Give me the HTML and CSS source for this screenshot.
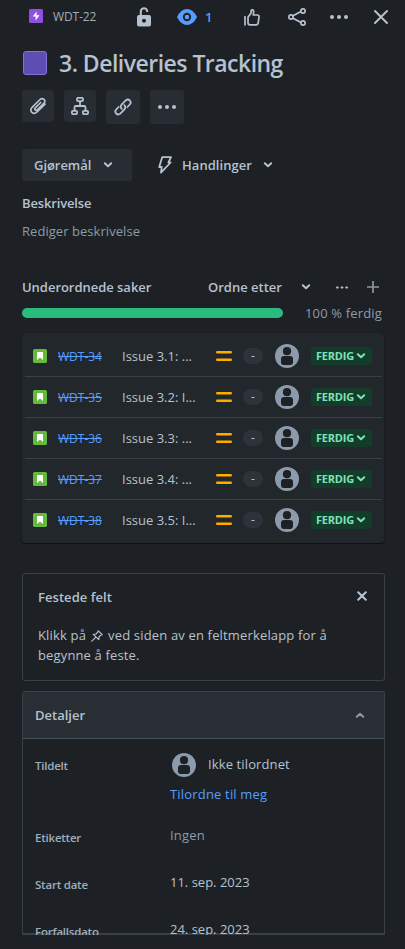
FILE: index.html
```html
<!DOCTYPE html>
<html lang="nb">
<head>
<meta charset="utf-8">
<title>WDT-22</title>
<link rel="stylesheet" href="styles.css">
</head>
<body>
<svg class="defs" width="0" height="0">
  <symbol id="chevron" viewBox="0 0 10 8"><path d="M1.8 2.2 5 5.2 8.2 2.2" fill="none" stroke="currentColor" stroke-width="2" stroke-linecap="round" stroke-linejoin="round"/></symbol>
  <symbol id="dots" viewBox="0 0 18 4"><circle cx="2" cy="2" r="2"/><circle cx="9" cy="2" r="2"/><circle cx="16" cy="2" r="2"/></symbol>
  <symbol id="avatar" viewBox="0 0 24 24"><circle cx="12" cy="12" r="12" fill="#8c9bab"/><circle cx="12" cy="7.2" r="4.1" fill="#1d2125"/><path d="M6 15a3 3 0 0 1 3-3h6a3 3 0 0 1 3 3v3.600a2.400 2.400 0 0 1-2.400 2.400H8.400A2.400 2.400 0 0 1 6 18.600z" fill="#1d2125"/></symbol>
  <symbol id="story" viewBox="0 0 14 14"><rect width="14" height="14" rx="1.5" fill="#63ba3c"/><path d="M4 3.500Q4 3 4.500 3H9.500Q10 3 10 3.500V11L7 8.500 4 11z" fill="#fff"/></symbol>
  <symbol id="medium" viewBox="0 0 16 10"><path d="M1.200 1.300h13.600M1.200 8.700h13.600" stroke="#ffab00" stroke-width="2.400" stroke-linecap="round"/></symbol>
</svg>

<header class="topbar">
  <svg class="epic" width="14" height="14" viewBox="0 0 14 14"><rect width="14" height="14" rx="1.500" fill="#904ee2"/><path d="M7.600 2.500 3.700 7.600H6.600V11.500L10.500 6.300H7.600z" fill="#fff"/></svg>
  <span class="key">WDT-22</span>
  <svg class="lock" width="14" height="20" viewBox="0 0 14 20"><path d="M3.800 9V4.600a3.200 3.200 0 0 1 6.400-.4V5" fill="none" stroke="#b6c2cf" stroke-width="2"/><path fill-rule="evenodd" d="M2 8h10a2 2 0 0 1 2 2v7.500a2 2 0 0 1-2 2H2a2 2 0 0 1-2-2V10a2 2 0 0 1 2-2zm5 3.800a2 2 0 1 0 0 4 2 2 0 0 0 0-4z" fill="#b6c2cf"/></svg>
  <svg class="eye" width="20" height="16" viewBox="0 0 20 16"><path d="M0 8Q4 0 10 0t10 8q-4 8-10 8T0 8z" fill="#579dff"/><circle cx="10" cy="8" r="3.200" fill="#579dff" stroke="#1d2125" stroke-width="1.900"/><circle cx="10" cy="8" r="1.500" fill="#579dff"/></svg>
  <span class="watchers">1</span>
  <svg class="like" width="16" height="17" viewBox="0 0 16 17"><path d="M1 7.500v8.300M4 8.300 7.100 4V2q0-1.200 1.200-1.200T9.700 2.300L9.200 6h4q2.100 0 1.800 2.100l-.8 5.700q-.3 2-2.200 2H6q-2 0-2-2z" fill="none" stroke="#b6c2cf" stroke-width="1.700" stroke-linecap="round" stroke-linejoin="round"/></svg>
  <svg class="share" width="18" height="18" viewBox="0 0 18 18"><path d="M4.500 8 13 3.500M4.500 10 13 14.500" stroke="#b6c2cf" stroke-width="1.800"/><g fill="#1d2125" stroke="#b6c2cf" stroke-width="1.700"><circle cx="3" cy="9" r="2.100"/><circle cx="15" cy="3" r="2.100"/><circle cx="15" cy="15" r="2.100"/></g></svg>
  <svg class="more" width="18" height="4"><use href="#dots"/></svg>
  <svg class="close" width="14" height="14" viewBox="0 0 14 14"><path d="M1 1l12 12M13 1 1 13" stroke="#b6c2cf" stroke-width="1.900" stroke-linecap="round"/></svg>
</header>

<main>
  <div class="heading">
    <span class="swatch"></span>
    <h1>3. Deliveries Tracking</h1>
  </div>

  <div class="tools">
    <button class="tool"><svg width="18" height="18" viewBox="0 0 18 18"><path d="m11.700 5.500-5.600 5.600q-.8 1 .1 1.900t1.900.1l6.700-6.700q2-2.100.2-4-2-1.800-4 .1L3.100 10.300q-2.400 2.700-.2 5 2.300 2.100 4.900-.1l8.200-8" fill="none" stroke="#b6c2cf" stroke-width="1.700" stroke-linecap="round"/></svg></button>
    <button class="tool"><svg width="18" height="18" viewBox="0 0 18 18"><g fill="none" stroke="#b6c2cf" stroke-width="1.800"><rect x="6" y=".9" width="6" height="3.200" rx="1"/><rect x=".9" y="13.900" width="5.200" height="3.200" rx="1"/><rect x="11.900" y="13.900" width="5.200" height="3.200" rx="1"/><path d="M9 4.500V9M3.500 13.500v-3q0-1.500 1.500-1.500h8q1.500 0 1.500 1.500v3"/></g></svg></button>
    <button class="tool wide"><svg width="18" height="18" viewBox="0 0 18 18"><g fill="none" stroke="#b6c2cf" stroke-width="1.800" stroke-linecap="round"><path d="M7.700 10.800q-2-2.300.1-4.400l3.900-4q2.200-1.800 4.100.1 1.800 2 0 4L13.400 9"/><path d="M10.300 7.200q2 2.300-.1 4.400l-3.900 4q-2.200 1.800-4.100-.1-1.800-2 0-4L4.600 9"/></g></svg></button>
    <button class="tool wide"><svg width="18" height="4"><use href="#dots"/></svg></button>
  </div>

  <div class="actions">
    <button class="status"><span class="t-status">Gjøremål</span><svg width="10" height="8"><use href="#chevron"/></svg></button>
    <button class="plain"><svg width="14" height="18" viewBox="0 0 14 18"><path d="M4.200 1.200H13L10.400 6.500H12.600L3 16.700 3.700 11H1.200z" fill="none" stroke="#b6c2cf" stroke-width="1.800" stroke-linejoin="round"/></svg><span class="t-actions">Handlinger</span><svg width="10" height="8"><use href="#chevron"/></svg></button>
  </div>

  <h2 class="desc-title">Beskrivelse</h2>
  <p class="desc">Rediger beskrivelse</p>

  <div class="children-head">
    <h2>Underordnede saker</h2>
    <span class="sort">Ordne etter</span>
    <svg class="sort-icon" width="10" height="8"><use href="#chevron"/></svg>
    <svg class="small-dots" width="12" height="3" viewBox="0 0 18 4"><use href="#dots"/></svg>
    <svg width="12" height="12" viewBox="0 0 12 12"><path d="M6 0v12M0 6h12" stroke="#8c97a4" stroke-width="1.700"/></svg>
  </div>
  <div class="progress"><span class="bar"></span><span class="done">100 % ferdig</span></div>

  <ul class="issues">
    <li><svg width="14" height="14"><use href="#story"/></svg><a>WDT-34</a><span class="name">Issue 3.1: ...</span><svg class="prio" width="16" height="10"><use href="#medium"/></svg><span class="points">-</span><svg width="24" height="24"><use href="#avatar"/></svg><span class="lozenge"><b>FERDIG</b><svg width="10" height="8"><use href="#chevron"/></svg></span></li>
    <li><svg width="14" height="14"><use href="#story"/></svg><a>WDT-35</a><span class="name">Issue 3.2: I...</span><svg class="prio" width="16" height="10"><use href="#medium"/></svg><span class="points">-</span><svg width="24" height="24"><use href="#avatar"/></svg><span class="lozenge"><b>FERDIG</b><svg width="10" height="8"><use href="#chevron"/></svg></span></li>
    <li><svg width="14" height="14"><use href="#story"/></svg><a>WDT-36</a><span class="name">Issue 3.3: ...</span><svg class="prio" width="16" height="10"><use href="#medium"/></svg><span class="points">-</span><svg width="24" height="24"><use href="#avatar"/></svg><span class="lozenge"><b>FERDIG</b><svg width="10" height="8"><use href="#chevron"/></svg></span></li>
    <li><svg width="14" height="14"><use href="#story"/></svg><a>WDT-37</a><span class="name">Issue 3.4: ...</span><svg class="prio" width="16" height="10"><use href="#medium"/></svg><span class="points">-</span><svg width="24" height="24"><use href="#avatar"/></svg><span class="lozenge"><b>FERDIG</b><svg width="10" height="8"><use href="#chevron"/></svg></span></li>
    <li><svg width="14" height="14"><use href="#story"/></svg><a>WDT-38</a><span class="name">Issue 3.5: I...</span><svg class="prio" width="16" height="10"><use href="#medium"/></svg><span class="points">-</span><svg width="24" height="24"><use href="#avatar"/></svg><span class="lozenge"><b>FERDIG</b><svg width="10" height="8"><use href="#chevron"/></svg></span></li>
  </ul>

  <section class="pinned">
    <div class="pinned-head"><h2>Festede felt</h2><svg width="10" height="10" viewBox="0 0 10 10"><path d="M1.200 1.200l7.600 7.600M8.800 1.200 1.200 8.800" stroke="#b6c2cf" stroke-width="2" stroke-linecap="round"/></svg></div>
    <p><span class="line1">Klikk på <svg width="12" height="12" viewBox="0 0 12 12"><path d="M7.300.8 11.200 4.700 9.800 5.200 8 7 7.700 9.700 2.300 4.300 5 4 6.800 2.200zM4.700 7.300.8 11.200" fill="none" stroke="#b6c2cf" stroke-width="1.200" stroke-linejoin="round" stroke-linecap="round"/></svg> ved siden av en feltmerkelapp for å</span><br><span class="line2">begynne å feste.</span></p>
  </section>

  <section class="details">
    <div class="details-head"><h2>Detaljer</h2><svg width="10" height="8"><use href="#chevron"/></svg></div>
    <dl>
      <div class="field assignee"><dt>Tildelt</dt><dd><span class="person"><svg width="24" height="24"><use href="#avatar"/></svg><span class="who">Ikke tilordnet</span></span><a>Tilordne til meg</a></dd></div>
      <div class="field labels"><dt>Etiketter</dt><dd class="none">Ingen</dd></div>
      <div class="field"><dt>Start date</dt><dd class="date">11. sep. 2023</dd></div>
      <div class="field"><dt>Forfallsdato</dt><dd class="date">24. sep. 2023</dd></div>
    </dl>
  </section>
</main>
</body>
</html>
```
FILE: styles.css
```css
* { box-sizing: border-box; }
body {
  margin: 0;
  height: 949px;
  overflow: hidden;
  background: #1d2125;
  color: #b6c2cf;
  font: 13px/20px "Open Sans", "Noto Sans", sans-serif;
}
svg { display: block; flex: none; fill: #b6c2cf; }
.defs { position: absolute; }
h1, h2, p, ul, dl, dd { margin: 0; padding: 0; }
h2 { font-size: 13px; line-height: 20px; font-weight: 600; letter-spacing: -.15px; }
button { border: 0; padding: 0; color: inherit; font: inherit; font-weight: 600; }
span, a, b { white-space: nowrap; }

.topbar { display: flex; align-items: center; height: 33px; padding-left: 29px; }
.epic { margin-top: -2px; }
.key { width: 84px; padding-left: 10px; font-size: 12px; color: #9fadbc; letter-spacing: -.1px; }
.lock { margin-left: 10px; }
.eye { margin-left: 26px; margin-top: 1px; }
.eye + .watchers { width: 10px; margin: 1px 29px 0 8px; color: #579dff; font-weight: 600; }
.like { margin-top: 1px; }
.share { margin-left: 28px; }
.more { margin-left: 24px; }
.close { margin-left: 26px; }

main { padding: 0 20px 0 22px; }
.heading { display: flex; align-items: center; height: 60px; padding-left: 1px; }
.swatch { width: 24px; height: 24px; border: 1px solid #8270db; border-radius: 3px; background: #5e4db2; }
h1 { margin-left: 12px; font-size: 23px; line-height: 28px; font-weight: 600; letter-spacing: -.52px; white-space: nowrap; }

.tools { display: flex; margin-top: -3px; height: 34px; gap: 10px; }
.tool { display: flex; align-items: center; justify-content: center; width: 32px; height: 32px; border-radius: 3px; background: #282d33; }
.tool.wide { width: 34px; height: 34px; }

.actions { display: flex; margin-top: 25px; height: 32px; }
.status { display: flex; align-items: center; width: 110px; padding-left: 12px; border-radius: 3px; background: #282d33; }
.t-status { width: 69px; text-align: left; letter-spacing: -.05px; }
.plain { display: flex; align-items: center; margin-left: 26px; background: none; }
.t-actions { width: 81px; margin-left: 10px; text-align: left; letter-spacing: .05px; }

.desc-title { margin-top: 12px; }
.desc { margin-top: 8px; color: #8c9bab; letter-spacing: .05px; }

.children-head { display: flex; align-items: center; margin-top: 36px; height: 20px; }
.children-head h2 { width: 186px; letter-spacing: -.03px; }
.sort { width: 93px; font-weight: 600; letter-spacing: 0; }
.small-dots { margin: 0 19px 0 25px; }

.progress { display: flex; align-items: center; margin-top: 6px; height: 20px; }
.bar { width: 261px; height: 10px; border-radius: 5px; background: #2abb7f; }
.done { margin-left: 22px; color: #8c9bab; letter-spacing: .15px; }

.issues { width: 362px; height: 210px; margin-top: 10px; padding: 3px 2px 2px 3px; list-style: none; border-radius: 3px; background: #22272b; box-shadow: 0 1px 1px #03040480, 0 0 1px #03040480; }
.issues li { display: flex; align-items: center; height: 41px; padding-left: 8px; border-bottom: 1px solid #38414a; }
.issues li:last-child { border-bottom-color: transparent; }
.issues a { width: 75px; padding: 1px 0 0 11px; font-size: 12px; font-weight: 500; color: #579dff; text-decoration: line-through; letter-spacing: 0; }
.name { width: 94px; margin-top: -1px; }
.points { width: 20px; height: 16px; margin: 0 12px 0 11px; border-radius: 8px; background: #2c333a; font-size: 12px; line-height: 16px; text-align: center; }
.lozenge { display: flex; align-items: center; width: 61px; height: 18px; margin-left: 12px; padding-left: 5px; border-radius: 3px; background: #143c2b; color: #7ee2b8; }
.lozenge b { width: 40px; font-size: 11px; line-height: 16px; letter-spacing: -.2px; }

.pinned { width: 363px; height: 108px; margin-top: 30px; padding: 13px 15px; border: 1px solid #38414a; border-radius: 3px; }
.pinned-head { display: flex; justify-content: space-between; }
.pinned-head h2 { letter-spacing: .05px; }
.pinned-head svg { margin: 4px 2px 0 0; }
.pinned p { margin-top: 18px; }
.pinned p svg { display: inline-block; margin: 0 2px 0 1px; vertical-align: -2px; }
.line1 { letter-spacing: .16px; }
.line2 { letter-spacing: .14px; }

.details { width: 363px; height: 244px; margin-top: 10px; border: 1px solid #38414a; border-bottom: 0; border-radius: 3px 3px 0 0; overflow: hidden; background: linear-gradient(#38414a, #38414a) 0 241px / 100% 2px no-repeat; }
.details-head { display: flex; align-items: center; justify-content: space-between; height: 47px; padding: 0 19px 0 12px; border-bottom: 1px solid #454f59; background: #282e33; }
.details-head h2 { letter-spacing: 0; }
.details-head svg { transform: rotate(180deg); color: #8c9bab; }
.field { display: grid; grid-template-columns: 135px 1fr; height: 47px; padding-left: 12px; }
.field dt { padding-top: 3px; font-size: 11.5px; font-weight: 600; color: #9fadbc; letter-spacing: -.22px; }
.assignee { height: 86px; padding-top: 14px; }
.person { display: flex; align-items: center; height: 24px; margin-left: 2px; }
.who { margin: -2px 0 0 12px; letter-spacing: .12px; }
.assignee a { display: block; margin-top: 7px; color: #579dff; letter-spacing: .18px; }
.none { color: #8c9bab; letter-spacing: .2px; }
```
